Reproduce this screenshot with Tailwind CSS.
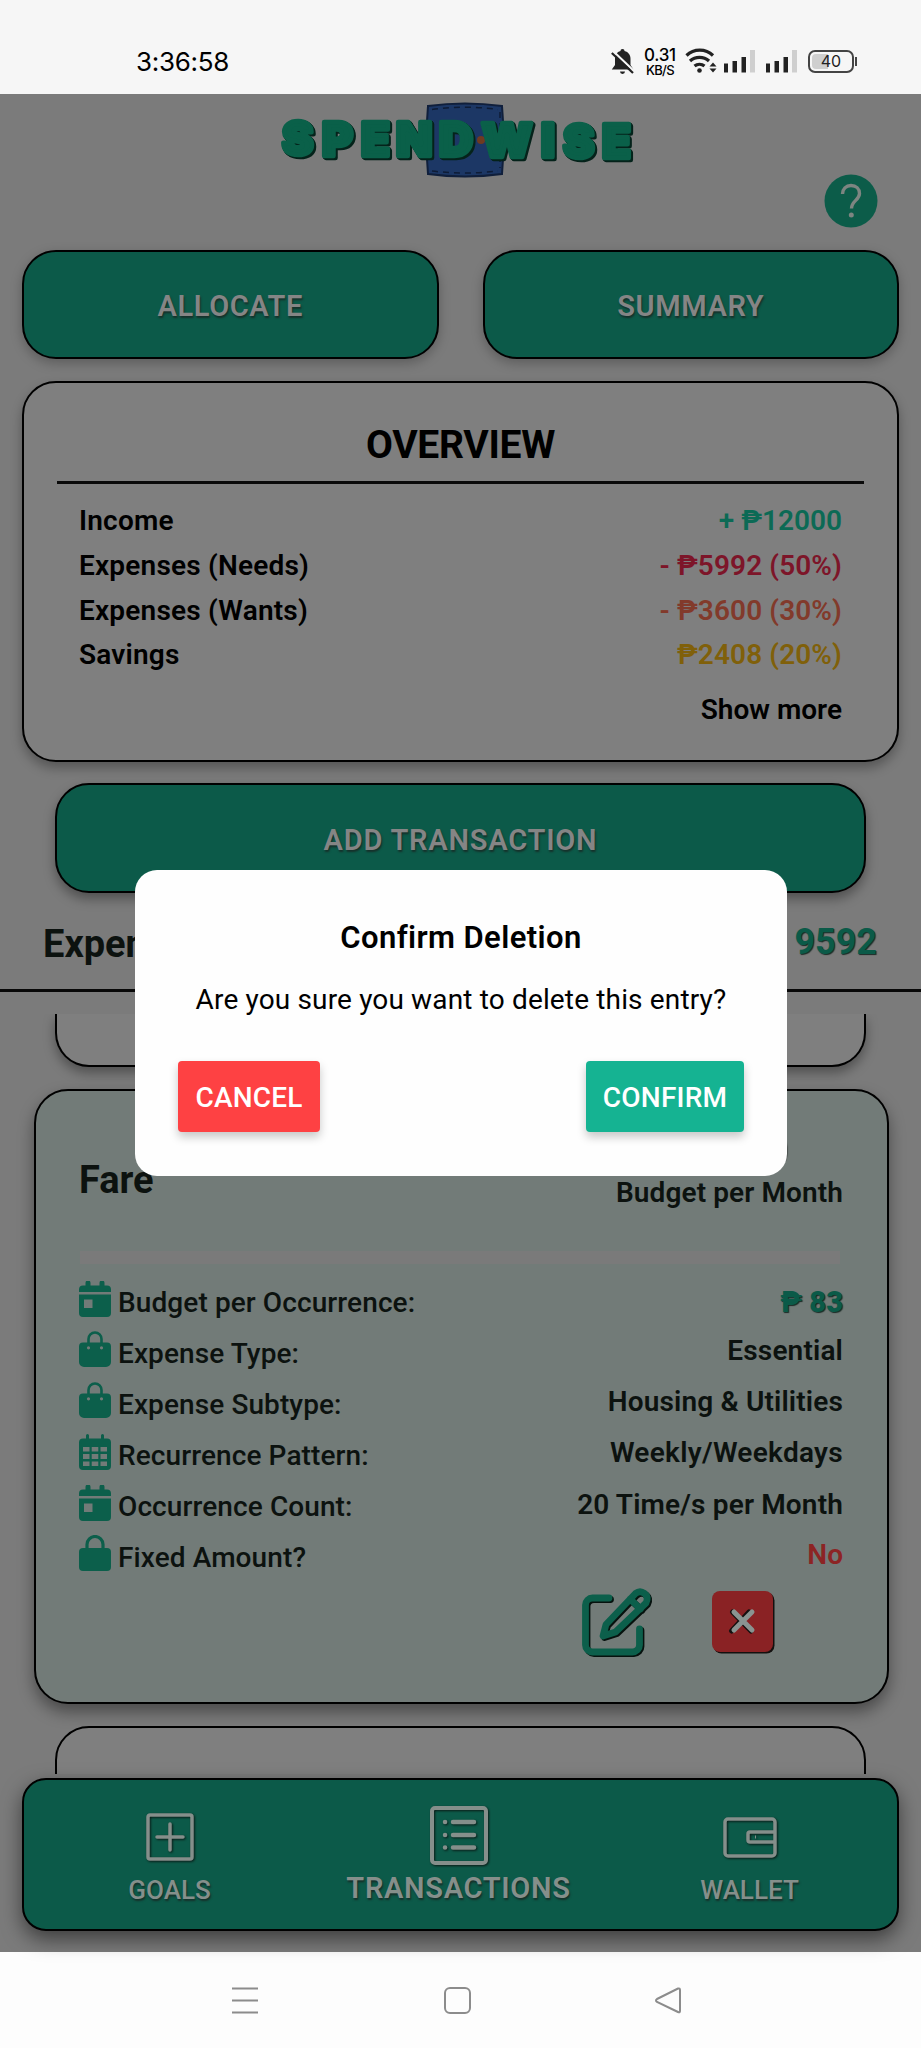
<!DOCTYPE html>
<html lang="en">
<head>
<meta charset="utf-8">
<title>SpendWise</title>
<script src="https://cdn.jsdelivr.net/npm/@tailwindcss/browser@4"></script>
</head>
<body class="w-[921px] h-[2048px] overflow-hidden bg-[#7b7b7b] font-[Roboto,sans-serif] font-medium text-[28px] text-black">
<svg class="hidden">
  <symbol id="cal" viewBox="0 0 32 36"><path d="M4 4.500H6.500V2a2 2 0 0 1 5 0V4.500H20.500V2a2 2 0 0 1 5 0V4.500H28a4 4 0 0 1 4 4V11H0V8.500a4 4 0 0 1 4-4z"/><path fill-rule="evenodd" d="M0 13.500H32V32a4 4 0 0 1-4 4H4a4 4 0 0 1-4-4zM5 18.500v8.500h8.500v-8.500z"/></symbol>
  <symbol id="bag" viewBox="0 0 32 36"><path fill="none" stroke="currentColor" stroke-width="2.600" d="M9.500 13V8a6.500 6.500 0 0 1 13 0v5"/><path fill-rule="evenodd" d="M4 11.500H28a4 4 0 0 1 4 4V31a5 5 0 0 1-5 5H5a5 5 0 0 1-5-5V15.500a4 4 0 0 1 4-4zM9.500 15.200a1.600 1.600 0 1 0 0 3.200a1.600 1.600 0 0 0 0-3.200zM22.500 15.200a1.600 1.600 0 1 0 0 3.200a1.600 1.600 0 0 0 0-3.200z"/></symbol>
  <symbol id="grid" viewBox="0 0 32 36"><path fill-rule="evenodd" d="M4 4.500H7V1.500a1.500 1.500 0 0 1 3 0V4.500H22V1.500a1.500 1.500 0 0 1 3 0V4.500H28a4 4 0 0 1 4 4V32a4 4 0 0 1-4 4H4a4 4 0 0 1-4-4V8.500a4 4 0 0 1 4-4zM4 13v4.500h6.500V13zM12.700 13v4.500h6.600V13zM21.500 13v4.500H28V13zM4 20v5h6.500v-5zM12.700 20v5h6.600v-5zM21.500 20v5H28v-5zM4 27.500V32h6.500v-4.500zM12.700 27.500V32h6.600v-4.500zM21.500 27.500V32H28v-4.500z"/></symbol>
  <symbol id="lock" viewBox="0 0 32 36"><path fill="none" stroke="currentColor" stroke-width="3.200" d="M8 15V9.500a8 8 0 0 1 16 0V15"/><rect y="13" width="32" height="23" rx="4"/></symbol>
  <symbol id="bars" viewBox="0 0 31 23"><g fill="#222"><rect y="13.500" width="4" height="9"/><rect x="8.500" y="11" width="4.500" height="11.500"/><rect x="17.500" y="7" width="4.500" height="15.500"/></g><rect x="26" width="5" height="22.500" fill="#cfcfcf"/></symbol>
</svg>

<div class="h-[94px] bg-[#f6f6f6] flex items-start pt-[44px] pl-[136px] pr-[67px]">
  <div class="h-[36px] leading-[36px] text-[26px] font-normal font-[Inter,sans-serif] tracking-[-0.3px]">3:36:58</div>
  <div class="ml-auto flex items-start h-[36px]">
    <svg class="w-[23px] h-[26px] mt-[5px]" viewBox="0 0 23 26"><path fill="#222" d="M11.500 0c1.400 0 2 .8 2 2 4 1 6 4 6 8v6l3 4.500H.8L4 16v-6c0-4 1.800-7 5.500-8 0-1.200.6-2 2-2zM9 22.500h5a2.500 2.500 0 0 1-5 0z"/><path stroke="#f6f6f6" stroke-width="2.200" d="M2.500 2.500L24 23"/><path stroke="#222" stroke-width="2.200" d="M.8 4L22 24"/></svg>
    <div class="w-[34px] ml-[9px] mt-[4px] text-center font-[Inter,sans-serif] text-black flex flex-col items-center"><div class="text-[17px] leading-[15px] h-[15px] font-medium tracking-[-0.3px]">0.31</div><div class="text-[13px] leading-[14px] h-[14px] font-medium tracking-[-0.7px]">KB/S</div></div>
    <svg class="w-[32px] h-[26px] ml-[8px] mt-[4px]" viewBox="0 0 32 26"><g fill="none" stroke="#222" stroke-width="3.200"><path d="M1.500 7.500a19 19 0 0 1 26.500 0M5 13a14 14 0 0 1 19 0M9.500 18a8 8 0 0 1 10 0"/></g><circle cx="14.500" cy="22.500" r="2.300" fill="#222"/><path fill="#222" d="M24.500 18.500L28 14.500l3.500 4zM24.500 20.500L28 24.500l3.500-4z"/></svg>
    <svg class="w-[31px] h-[23px] ml-[7px] mt-[6px]"><use href="#bars"/></svg>
    <svg class="w-[31px] h-[23px] ml-[11px] mt-[6px]"><use href="#bars"/></svg>
    <div class="relative w-[46px] h-[23px] ml-[11px] mt-[6px] rounded-[7px] border-2 border-[#444] p-[2px]">
      <div class="w-[16px] h-full bg-[#cfcfcf] rounded-l-[4px]"></div>
      <div class="absolute inset-0 text-center text-[16px] leading-[19px] font-normal font-[Inter,sans-serif] text-[#222]">40</div>
      <div class="absolute -right-[5px] top-[5px] w-[2px] h-[9px] bg-[#444]"></div>
    </div>
  </div>
</div>

<div class="h-[1858px] flex flex-col">
  <header class="h-[156px] flex flex-col items-center pt-[6px]">
    <svg class="w-[370px] h-[80px] shrink-0" viewBox="275 100 370 80" role="img" aria-label="SpendWise">
      <path d="M427 106Q464 101 501 106Q504 140 501 174Q464 179 427 174Q424 140 427 106z" fill="#1c3765" stroke="#101f3b" stroke-width="2"/>
      <path d="M431 109.500Q464 105 497 109.500M431 171Q464 175 497 171M499 112V168" fill="none" stroke="#0e1c36" stroke-width="1.500" stroke-dasharray="6 5"/>
      <circle cx="480" cy="140" r="4" fill="#6f3a20"/>
      <g font-family="Inter" font-weight="900" font-size="47" stroke-width="4.600" stroke-linejoin="round" style="filter:drop-shadow(1px 1px 0 #05231b) drop-shadow(1px 1px 0 #05231b)">
        <text fill="#0a6049" stroke="#0a6049"><tspan x="281" y="155">S</tspan><tspan x="321" y="155.500">P</tspan><tspan x="360">E</tspan><tspan x="395">N</tspan><tspan x="438">D</tspan><tspan x="480.500" y="156.500">W</tspan><tspan x="540">I</tspan><tspan x="562" y="157.500">S</tspan><tspan x="601">E</tspan></text>
      </g>
    </svg>
    <svg class="w-[54px] h-[54px] shrink-0 self-end mr-[43px] -mt-[6px]" viewBox="0 0 54 54"><circle cx="27" cy="27" r="26.500" fill="#0c5c49"/><path d="M18.500 20c0-5 3.500-8.500 8.500-8.500s8.500 3.300 8.500 8c0 6.500-8 7.500-8 15" fill="none" stroke="#7d8581" stroke-width="3.400"/><circle cx="27.300" cy="41" r="2.500" fill="#7d8581"/></svg>
  </header>

  <div class="flex gap-[44px] px-[22px] text-[29px] leading-[108px] text-center font-semibold text-[#858585] tracking-[0.6px] [text-shadow:1px_2px_2px_#16302a]">
    <div class="h-[109px] flex-1 rounded-[34px] border-2 border-black bg-[#0c5a49] shadow-[0_4px_12px_rgba(0,0,0,0.25)]">ALLOCATE</div>
    <div class="h-[109px] flex-1 rounded-[34px] border-2 border-black bg-[#0c5a49] shadow-[0_4px_12px_rgba(0,0,0,0.25)]">SUMMARY</div>
  </div>

  <section class="mx-[22px] mt-[22px] h-[381px] shrink-0 rounded-[34px] border-2 border-black bg-[#7f7f7f] shadow-[0_6px_12px_rgba(0,0,0,0.3)] px-[33px]">
    <h1 class="text-center text-[39px] leading-[46px] mt-[39px] font-bold tracking-[-0.3px]">OVERVIEW</h1>
    <div class="h-[3px] bg-[#0a0a0a] mt-[13px]"></div>
    <div class="pl-[22px] pr-[22px] pt-[14px] leading-[45px] font-semibold tracking-[0.2px]">
      <div class="flex justify-between h-[45px]"><span>Income</span><span class="text-[#0c6a55] tracking-normal">+ ₱12000</span></div>
      <div class="flex justify-between h-[45px]"><span>Expenses (Needs)</span><span class="text-[#7d1529] tracking-[0.1px]">- ₱5992 (50%)</span></div>
      <div class="flex justify-between h-[44px]"><span>Expenses (Wants)</span><span class="text-[#823a2b] tracking-[0.1px]">- ₱3600 (30%)</span></div>
      <div class="flex justify-between h-[45px]"><span>Savings</span><span class="text-[#80600a] tracking-[0.1px]">₱2408 (20%)</span></div>
      <div class="text-right mt-[10px] tracking-normal">Show more</div>
    </div>
  </section>

  <div class="mx-[55px] mt-[21px] h-[110px] shrink-0 rounded-[34px] border-2 border-black bg-[#0c5a49] shadow-[0_6px_12px_rgba(0,0,0,0.35)] text-center text-[29px] leading-[110px] font-semibold text-[#858585] tracking-[0.8px] [text-shadow:1px_2px_2px_#16302a]">ADD TRANSACTION</div>

  <div class="h-[99px] shrink-0 border-b-[3px] border-[#080808] flex justify-between pl-[43px] pr-[44px] text-[38px] leading-[102px]">
    <span class="text-[#0c120f] font-bold">Expenses</span><span class="text-[#0b5a48] font-bold text-[36px] leading-[98px] [text-shadow:1px_1px_1px_#1a2b26]">9592</span>
  </div>

  <main class="mt-[22px] h-[760px] shrink-0 overflow-hidden">
    <div class="mx-[55px] h-[53px] rounded-b-[34px] border-2 border-t-0 border-black bg-[#7f7f7f] shadow-[0_6px_12px_rgba(0,0,0,0.35)]"></div>
    <div class="ml-[34px] mr-[32px] mt-[22px] h-[615px] rounded-[34px] border-2 border-black bg-[#727b78] shadow-[0_8px_16px_rgba(0,0,0,0.4)] px-[44px] text-[#0c120f]">
      <div class="flex justify-between h-[160px]">
        <span class="text-[38px] leading-[44px] mt-[67px] -ml-[1px] font-bold">Fare</span>
        <div class="text-right mt-[40px]"><div class="text-[36px] leading-[40px] font-bold text-[#0b5a48] pr-[55px] [text-shadow:1px_1px_1px_#111]">₱ 1660</div><div class="leading-[40px] mt-[2px] font-semibold tracking-[0.1px]">Budget per Month</div></div>
      </div>
      <div class="h-[13px] bg-[#7a7a7a] mr-[3px]"></div>
      <div class="mt-[13px] leading-[51px]">
        <div class="flex h-[51px]"><svg class="w-[32px] h-[36px] mt-[4px] -ml-[1px] mr-[7px] text-[#0c5f4b] fill-current"><use href="#cal"/></svg><span class="tracking-[0.1px]">Budget per Occurrence:</span><span class="ml-auto font-black text-[29px] text-[#0b5a48] [text-shadow:1px_1px_1px_#1a2b26]">₱ 83</span></div>
        <div class="flex h-[51px]"><svg class="w-[32px] h-[36px] mt-[3px] -ml-[1px] mr-[7px] text-[#0c5f4b] fill-current"><use href="#bag"/></svg><span class="tracking-[0.1px]">Expense Type:</span><span class="ml-auto leading-[46px] font-semibold tracking-[0.15px]">Essential</span></div>
        <div class="flex h-[51px]"><svg class="w-[32px] h-[36px] mt-[3px] -ml-[1px] mr-[7px] text-[#0c5f4b] fill-current"><use href="#bag"/></svg><span class="tracking-[0.1px]">Expense Subtype:</span><span class="ml-auto leading-[46px] font-semibold tracking-[0.15px]">Housing &amp; Utilities</span></div>
        <div class="flex h-[51px]"><svg class="w-[32px] h-[36px] mt-[4px] -ml-[1px] mr-[7px] text-[#0c5f4b] fill-current"><use href="#grid"/></svg><span class="tracking-[0.1px]">Recurrence Pattern:</span><span class="ml-auto leading-[46px] font-semibold tracking-[0.3px]">Weekly/Weekdays</span></div>
        <div class="flex h-[51px]"><svg class="w-[32px] h-[36px] mt-[4px] -ml-[1px] mr-[7px] text-[#0c5f4b] fill-current"><use href="#cal"/></svg><span class="tracking-[0.1px]">Occurrence Count:</span><span class="ml-auto leading-[47px] font-semibold tracking-[0.15px]">20 Time/s per Month</span></div>
        <div class="flex h-[51px]"><svg class="w-[32px] h-[36px] mt-[3px] -ml-[1px] mr-[7px] text-[#0c5f4b] fill-current"><use href="#lock"/></svg><span class="tracking-[0.1px]">Fixed Amount?</span><span class="ml-auto leading-[46px] font-semibold text-[#8c2424]">No</span></div>
      </div>
      <div class="flex justify-end pr-[66px]">
        <svg class="w-[74px] h-[74px] mt-[2px] mr-[57px]" viewBox="0 0 74 74"><g fill="none" stroke-width="6.800" stroke-linecap="round" stroke-linejoin="round"><g stroke="#06120e" transform="translate(1.500 1.500)"><path d="M28 13H11.500a7 7 0 0 0-7 7V60a7 7 0 0 0 7 7H51.500a7 7 0 0 0 7-7V44"/><path d="M22 51L25 39.500 54.500 8.500Q59 5 63.500 8.500T65 18L34.500 47zM49 14L59.500 24"/></g><g stroke="#0c5f4b"><path d="M28 13H11.500a7 7 0 0 0-7 7V60a7 7 0 0 0 7 7H51.500a7 7 0 0 0 7-7V44"/><path d="M22 51L25 39.500 54.500 8.500Q59 5 63.500 8.500T65 18L34.500 47zM49 14L59.500 24"/></g></g></svg>
        <svg class="w-[65px] h-[65px] mt-[8px]" viewBox="0 0 65 65"><rect x="1.500" y="1.500" width="61" height="61" rx="8" fill="#14100f"/><rect width="61" height="61" rx="8" fill="#8a2224"/><g stroke-width="5" stroke-linecap="round"><path stroke="#14100f" d="M20.500 21L39 40M37 21L19.500 40"/><path stroke="#8a9491" d="M22 21L40 39M40 21L22 39"/></g></svg>
      </div>
    </div>
    <div class="mx-[55px] mt-[22px] h-[200px] rounded-[34px] border-2 border-black bg-[#7f7f7f] pt-[38px] pr-[99px] text-right text-[36px] leading-[44px] font-bold text-[#0b5a48]">₱ 1000</div>
  </main>

  <nav class="mx-[22px] mt-[4px] h-[153px] shrink-0 rounded-[24px] border-2 border-black bg-[#0c5a49] shadow-[0_8px_20px_rgba(0,0,0,0.5)] relative flex text-[#858f8b] text-[26px] [text-shadow:1px_2px_2px_#16302a]">
    <div class="w-[292px] flex flex-col items-center pt-[33px]"><svg class="w-[50px] h-[50px] drop-shadow-[1px_1px_1px_#0a1a16]" viewBox="0 0 50 50" fill="none" stroke="currentColor" stroke-width="3.500"><rect x="3" y="2" width="44" height="44" rx="2"/><path d="M12 24H38M25 11V37" stroke-linecap="round"/></svg><span class="leading-[30px] mt-[12px]">GOALS</span></div>
    <div class="w-[288px] flex flex-col items-center pt-[26px]"><svg class="w-[58px] h-[60px] drop-shadow-[1px_1px_1px_#0a1a16]" viewBox="0 0 58 60" fill="none" stroke="currentColor" stroke-width="4"><rect x="2" y="2" width="54" height="55" rx="3"/><path d="M23 16H44M23 29H44M23 41.500H44" stroke-linecap="round" stroke-width="4.500"/><path d="M15 16h.1M15 29h.1M15 41.500h.1" stroke-linecap="round" stroke-width="4.500"/></svg><span class="text-[29px] leading-[32px] mt-[6px] font-semibold tracking-[0.7px]">TRANSACTIONS</span></div>
    <div class="w-[296px] flex flex-col items-center pt-[36px]"><svg class="w-[56px] h-[44px] drop-shadow-[1px_1px_1px_#0a1a16]" viewBox="0 0 56 44" fill="none" stroke="currentColor" stroke-width="3.500"><rect x="3" y="3" width="50" height="37" rx="3"/><path d="M53 16H28a2 2 0 0 0-2 2v6a2 2 0 0 0 2 2H53"/><path d="M33 21h1" stroke-width="3"/></svg><span class="leading-[30px] mt-[15px]">WALLET</span></div>
  </nav>
</div>

<div class="h-[96px] bg-[#fdfdfd]">
  <svg class="w-[921px] h-[96px]" viewBox="0 1952 921 96" fill="none" stroke="#8c8c8c" stroke-width="2"><path d="M232 1988.500H258M232 2000.500H258M232 2012.500H258"/><rect x="445" y="1988" width="25" height="25" rx="5"/><path d="M657 1999L678 1988.500Q680 1988 680 1990V2011Q680 2013 678 2012L657 2002Q655 2000.500 657 1999z"/></svg>
</div>

<div class="absolute left-[135px] top-[870px] w-[652px] h-[306px] rounded-[22px] bg-[#fefefe] px-[43px] text-center">
  <h2 class="text-[31px] leading-[36px] mt-[50px] font-semibold tracking-[0.4px]">Confirm Deletion</h2>
  <p class="font-normal leading-[34px] mt-[27px] tracking-[0.15px]">Are you sure you want to delete this entry?</p>
  <div class="flex justify-between mt-[44px] text-white leading-[74px]">
    <div class="w-[142px] h-[71px] rounded-[4px] bg-[#fe4143] shadow-[0_5px_10px_rgba(0,0,0,0.22)] tracking-[0.2px]">CANCEL</div>
    <div class="w-[158px] h-[71px] rounded-[4px] bg-[#15b392] shadow-[0_5px_10px_rgba(0,0,0,0.22)] tracking-[0.2px]">CONFIRM</div>
  </div>
</div>
</body>
</html>
